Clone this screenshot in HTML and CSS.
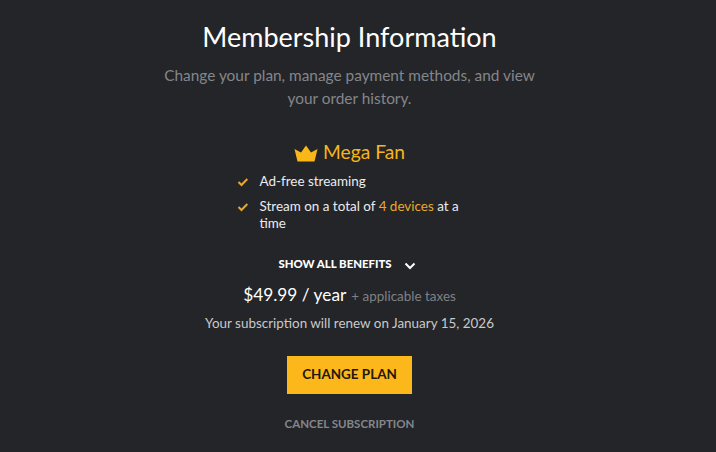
FILE: index.html
```html
<!DOCTYPE html>
<html lang="en">
<head>
  <meta charset="UTF-8">
  <title>Membership Information</title>
  <link rel="stylesheet" href="styles.css">
</head>
<body>
  <main class="membership">
    <h1>Membership Information</h1>
    <p class="subtitle">Change your plan, manage payment methods, and view your order history.</p>

    <h2 class="tier">
      <svg class="crown" viewBox="0 0 24 17"><path d="M0.5 4 L7 7.5 L12 0.5 L17 7.5 L23.5 4 L20.5 16.5 H3.5 Z"/></svg>
      <span>Mega Fan</span>
    </h2>

    <ul class="benefits">
      <li>
        <svg class="check" viewBox="0 0 12 10"><path d="M1.5 5 L4.5 8 L10.3 2"/></svg>
        <span>Ad-free streaming</span>
      </li>
      <li>
        <svg class="check" viewBox="0 0 12 10"><path d="M1.5 5 L4.5 8 L10.3 2"/></svg>
        <span>Stream on a total of <em>4 devices</em> at a time</span>
      </li>
    </ul>

    <button class="toggle" type="button">
      <span>SHOW ALL BENEFITS</span>
      <svg class="chevron" viewBox="0 0 12 8"><path d="M1.5 1.5 L6 6 L10.5 1.5"/></svg>
    </button>

    <p class="price">$49.99 / year <span class="taxes">+ applicable taxes</span></p>
    <p class="renewal">Your subscription will renew on January 15, 2026</p>

    <button class="change" type="button">CHANGE PLAN</button>
    <button class="cancel" type="button">CANCEL SUBSCRIPTION</button>
  </main>
</body>
</html>
```
FILE: styles.css
```css
* { box-sizing: border-box; margin: 0; padding: 0; }
body { background: #232529; color: #fff; font-family: Lato, sans-serif; }
button { border: none; background: none; font-family: inherit; color: inherit; cursor: pointer; }
.membership {
  display: flex;
  flex-direction: column;
  align-items: center;
  width: 699px;
  height: 452px;
  padding-top: 20px;
}
h1 { font-size: 27px; font-weight: 400; line-height: 34px; }
.subtitle {
  width: 390px;
  margin-top: 10px;
  font-size: 15.4px;
  line-height: 23px;
  text-align: center;
  color: #85868a;
}
.tier {
  display: flex;
  align-items: center;
  gap: 5px;
  margin-top: 30px;
  font-size: 19.2px;
  font-weight: 400;
  line-height: 24px;
  color: #f9b41b;
}
.crown { width: 24px; height: 17px; margin-top: 2px; fill: #fab818; }
.benefits { width: 226px; margin-top: 9px; list-style: none; }
.benefits li {
  display: flex;
  gap: 11px;
  margin-bottom: 8px;
  font-size: 13.44px;
  line-height: 17px;
  color: #ececed;
}
.benefits em { font-style: normal; color: #e9a92a; }
.check { flex: none; width: 12px; height: 10px; margin-top: 4px; fill: none; stroke: #e5aa2b; stroke-width: 2; }
.toggle {
  display: flex;
  align-items: center;
  gap: 12px;
  margin-top: 16px;
  margin-right: 5px;
  font-size: 11.4px;
  font-weight: 900;
  line-height: 16px;
}
.chevron { width: 12px; height: 8px; margin-top: 3px; fill: none; stroke: #fff; stroke-width: 2; }
.price { margin-top: 12px; font-size: 17.3px; line-height: 22px; }
.taxes { margin-left: 1px; font-size: 13.44px; color: #808185; }
.renewal { margin-top: 7px; font-size: 13.44px; line-height: 18px; color: #c8c9cb; }
.change {
  width: 125px;
  height: 38px;
  margin-top: 24px;
  padding-bottom: 2px;
  background: #fcb71b;
  color: #23160a;
  font-size: 13.44px;
  font-weight: 700;
}
.cancel { margin-top: 22px; font-size: 11.5px; font-weight: 700; line-height: 16px; color: #85868a; }
```
